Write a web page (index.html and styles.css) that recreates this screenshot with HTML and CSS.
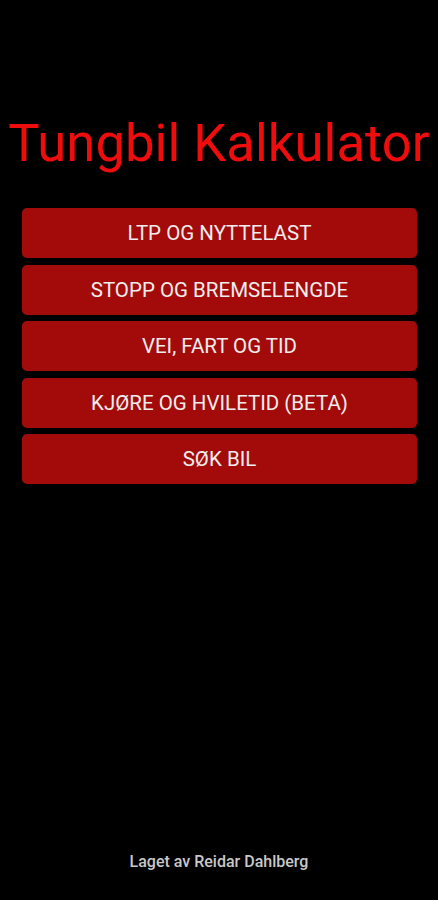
FILE: index.html
```html
<html>
<head>
  <title>Tungbil Kalkulator</title>
  <meta name="viewport" content="width=device-width, initial-scale=1.0">
  <link rel="stylesheet" href="styles.css">
</head>
<body>
  <div class="app">
    <h1 class="title">Tungbil Kalkulator</h1>
    <div class="menu">
      <div class="menu-button">LTP OG NYTTELAST</div>
      <div class="menu-button">STOPP OG BREMSELENGDE</div>
      <div class="menu-button">VEI, FART OG TID</div>
      <div class="menu-button">KJØRE OG HVILETID (BETA)</div>
      <div class="menu-button">SØK BIL</div>
    </div>
    <div class="footer">Laget av Reidar Dahlberg</div>
  </div>
</body>
</html>
```

FILE: styles.css
```css
body {
  margin: 0;
  background: #000;
  font-family: Roboto, "Noto Sans", sans-serif;
}
.app {
  height: 900px;
  display: flex;
  flex-direction: column;
}
.title {
  margin: 112px 0 0;
  text-align: center;
  color: #ee0c0c;
  font-weight: 400;
  font-size: 52.7px;
  line-height: 62px;
}
.menu {
  margin: 34px 21px 0 22px;
  display: flex;
  flex-direction: column;
  gap: 6.5px;
}
.menu-button {
  height: 50px;
  background: #a30a0a;
  border-radius: 5px;
  color: #eee;
  font-size: 20.5px;
  font-weight: 400;
  display: flex;
  align-items: center;
  justify-content: center;
}
.footer {
  margin-top: auto;
  margin-bottom: 29px;
  text-align: center;
  color: #c8c8c8;
  font-size: 16px;
  font-weight: 500;
}
```
